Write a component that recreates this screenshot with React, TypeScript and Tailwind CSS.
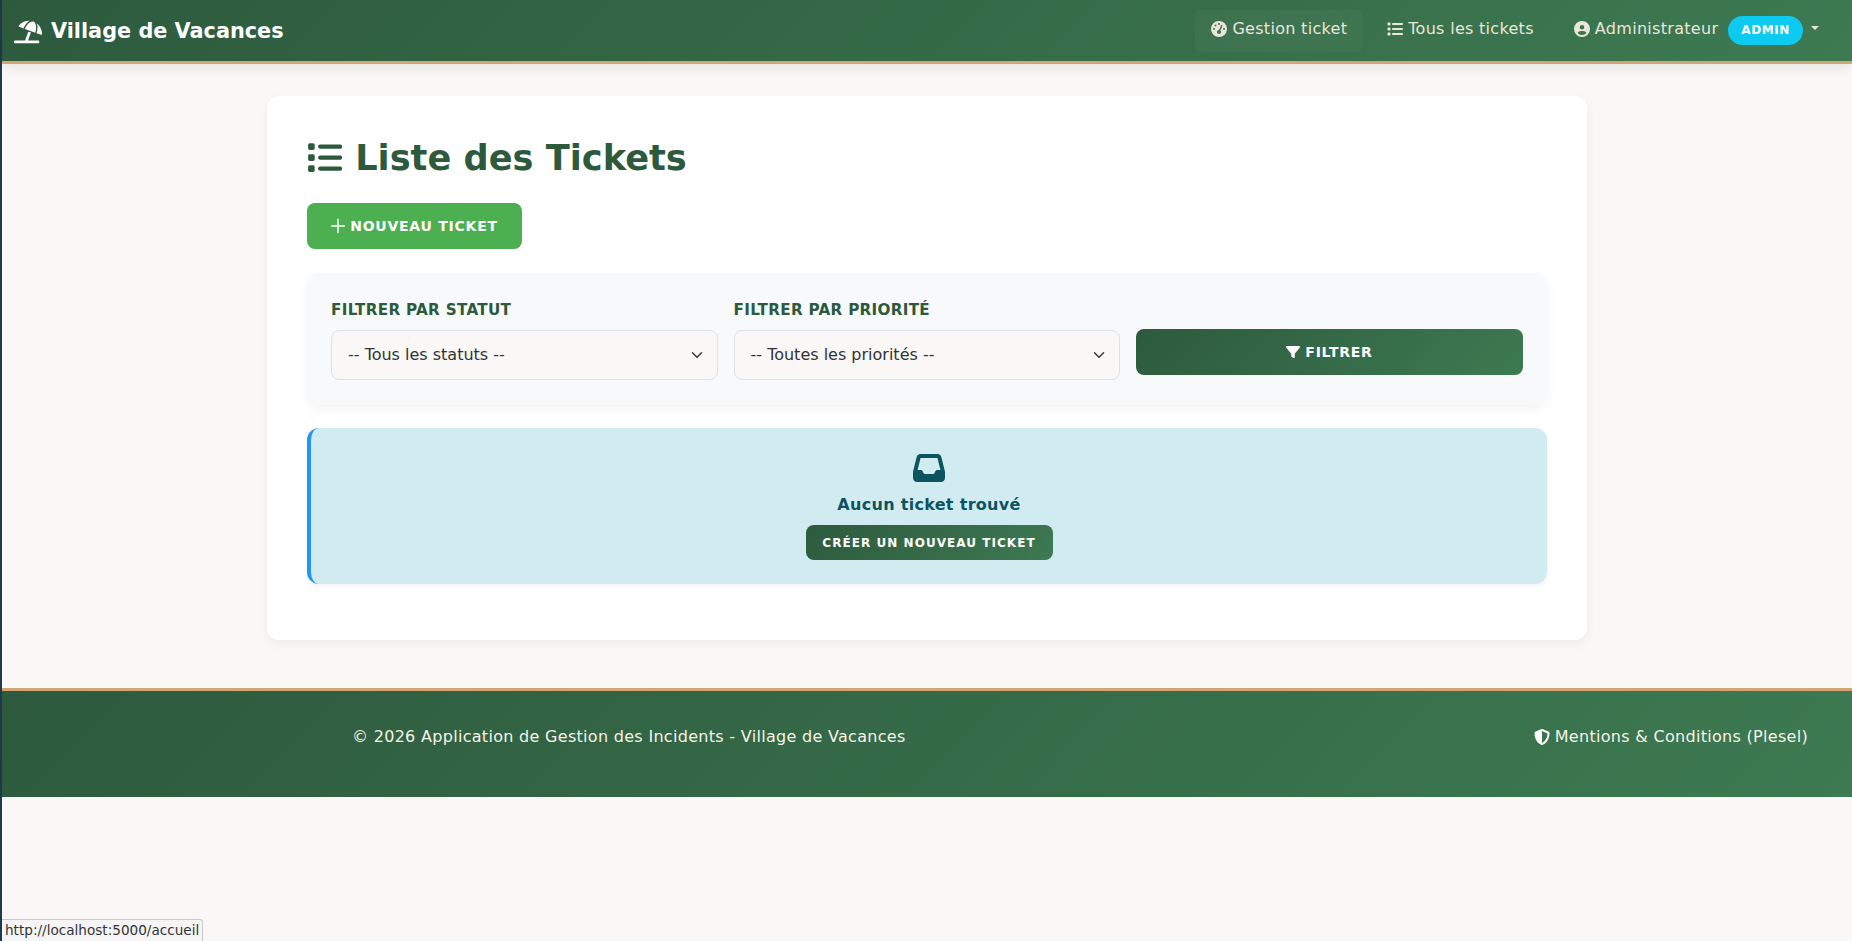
import { Plus } from "lucide-react";
import { FaUmbrellaBeach } from "react-icons/fa";
import { FaCircleUser, FaFilter, FaGaugeHigh, FaInbox, FaList, FaShieldHalved } from "react-icons/fa6";

const filters = [
  { label: "FILTRER PAR STATUT", value: "-- Tous les statuts --" },
  { label: "FILTRER PAR PRIORITÉ", value: "-- Toutes les priorités --" },
];

const gradient = "bg-[linear-gradient(135deg,#2d5a3d,#3d7a52)]";

export default function App() {
  return (
    <div className="relative flex h-screen overflow-hidden bg-[#1e3a4f] font-['DejaVu_Sans',sans-serif] text-[16px] tracking-[0.3px] text-[#212529]">
      <div className="ml-[2px] flex min-w-0 flex-1 flex-col bg-[#f9f8f6]">
        <nav className={`flex h-[64px] shrink-0 items-center justify-between border-b-[3px] border-[#d4a574] ${gradient} pl-[12px] pr-[17px] shadow-[0_4px_12px_rgba(0,0,0,0.08)]`}>
          <a className="mt-[2px] flex items-center gap-[9px] text-[20.8px] font-bold tracking-normal text-white">
            <FaUmbrellaBeach className="text-[28px]" />
            Village de Vacances
          </a>
          <div className="flex items-center text-[#e9e6da]">
            <a className="mr-[8px] flex h-[42px] items-center gap-[5px] rounded-[6px] bg-white/[0.03] px-[16px] pb-[3px]">
              <FaGaugeHigh className="text-[16px]" />
              Gestion ticket
            </a>
            <a className="mr-[8px] flex h-[42px] items-center gap-[5px] px-[16px] pb-[3px]">
              <FaList className="text-[16px]" />
              Tous les tickets
            </a>
            <a className="flex h-[42px] items-center gap-[5px] px-[16px]">
              <FaCircleUser className="mb-[3px] text-[16px]" />
              <span className="mb-[3px]">Administrateur</span>
              <span className="ml-[5px] rounded-full bg-[#0dcaf0] px-[13px] py-[6px] text-[12px] font-bold leading-[17px] tracking-[0.6px] text-white">
                ADMIN
              </span>
              <span className="mb-[5px] ml-[3px] h-0 w-0 border-x-[4.8px] border-t-[4.8px] border-x-transparent border-t-[#e9e6da]" />
            </a>
          </div>
        </nav>

        <main className="flex shrink-0 flex-col pt-[32px] pb-[48px]">
          <div className="ml-[265px] w-[1320px] rounded-[12px] bg-white px-[40px] pt-[38px] pb-[56px] shadow-[0_4px_12px_rgba(0,0,0,0.05)]">
            <h1 className="flex h-[48px] items-center gap-[13px] text-[35.2px] font-bold leading-[48px] tracking-normal text-[#2d5a3d]">
              <FaList />
              Liste des Tickets
            </h1>
            <button className="mt-[21px] flex h-[46px] w-[215px] items-center justify-center gap-[6px] rounded-[8px] bg-[#4caf50] text-[14px] font-bold tracking-[0.75px] text-white">
              <Plus size={22} strokeWidth={1.6} className="-mx-[4.5px]" />
              NOUVEAU TICKET
            </button>

            <div className="mt-[24px] flex h-[132px] gap-[16px] rounded-[12px] bg-[#f8f9fa] px-[24px] pt-[25px] shadow-[0_4px_12px_rgba(0,0,0,0.05)]">
              {filters.map((f) => (
                <div key={f.label} className="w-[386.5px]">
                  <label className="block text-[15.2px] font-semibold leading-[24px] text-[#2d5a3d]">
                    {f.label}
                  </label>
                  <div className="mt-[8px] flex h-[50px] items-center justify-between rounded-[8px] border border-[#dee2e6] bg-[#f9f8f6] pl-[16px] pr-[12px] tracking-normal text-[#333]">
                    {f.value}
                    <svg className="h-[12px] w-[16px]" viewBox="0 0 16 16" fill="none" stroke="#343a40" strokeWidth="2" strokeLinecap="round" strokeLinejoin="round">
                      <path d="m2 5 6 6 6-6" />
                    </svg>
                  </div>
                </div>
              ))}
              <div className="w-[387px] pt-[31px]">
                <button className={`flex h-[46px] w-full items-center justify-center gap-[5px] rounded-[8px] ${gradient} text-[14px] font-bold tracking-[0.75px] text-white`}>
                  <FaFilter className="text-[14px]" />
                  FILTRER
                </button>
              </div>
            </div>

            <div className="mt-[23px] flex h-[156px] flex-col items-center rounded-[12px] border-l-4 border-[#2196f3] bg-[#d1ecf1] pt-[24px] text-[#0c5460] shadow-[0_2px_6px_rgba(0,0,0,0.05)]">
              <FaInbox className="text-[32px]" />
              <p className="mt-[9px] text-[16px] font-bold leading-[24px]">Aucun ticket trouvé</p>
              <button className={`mt-[8px] flex h-[35px] w-[247px] items-center justify-center rounded-[8px] ${gradient} text-[12px] font-bold tracking-[1.05px] text-white`}>
                CRÉER UN NOUVEAU TICKET
              </button>
            </div>
          </div>
        </main>

        <footer className={`flex h-[109px] shrink-0 items-start justify-between border-t-[3px] border-[#d4a574] ${gradient} pt-[34px] pl-[350px] pr-[44px] text-[#f5f3e8]`}>
          <span>© 2026 Application de Gestion des Incidents - Village de Vacances</span>
          <a className="flex items-center gap-[5px]">
            <FaShieldHalved className="text-[16px] text-white" />
            Mentions &amp; Conditions (Plesel)
          </a>
        </footer>
      </div>

      <div className="absolute bottom-0 left-[2px] h-[22px] rounded-tr-[3px] border-t border-r border-[#c8c8c8] bg-[#f5f5f5] px-[3px] text-[13.6px] leading-[21px] tracking-normal text-[#333]">
        http://localhost:5000/accueil
      </div>
    </div>
  );
}
